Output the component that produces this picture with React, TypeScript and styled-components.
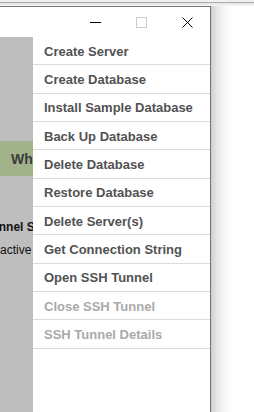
import React from "react";
import styled, { createGlobalStyle } from "styled-components";

const GlobalStyle = createGlobalStyle`
    html, body {
        margin: 0;
        padding: 0;
        background: #ffffff;
        overflow: hidden;
    }
    body {
        font-family: "Liberation Sans", Arial, sans-serif;
    }
`;

const Screen = styled.div`
    width: 254px;
    height: 412px;
    overflow: hidden;
    background: #ffffff;
    display: flex;
    flex-direction: column;
`;

const TopEdge = styled.div`
    height: 6px;
    flex-shrink: 0;
    background: linear-gradient(to bottom, #f0f0f0 0px, #f0f0f0 2px, #a9a9a9 2px, #a9a9a9 3px, #e6e6e6 3px, #f3f3f3 6px);
`;

const Desk = styled.div`
    flex: 1;
    display: flex;
    min-height: 0;
`;

const Window = styled.div`
    width: 211px;
    flex-shrink: 0;
    box-sizing: border-box;
    border-top: 1px solid #7a7a7a;
    border-right: 1px solid #6f6f6f;
    background: #ffffff;
    display: flex;
    flex-direction: column;
`;

const Shadow = styled.div`
    width: 24px;
    background: linear-gradient(to right, #cfcfcf 0px, #e6e6e6 6px, #f7f7f7 14px, #ffffff 22px);
`;

const TitleBar = styled.div`
    height: 30px;
    flex-shrink: 0;
    display: flex;
    justify-content: flex-end;
`;

const CaptionButton = styled.div`
    width: 46px;
    height: 30px;
    display: flex;
    align-items: center;
    justify-content: center;
`;

const Body = styled.div`
    flex: 1;
    display: flex;
    min-height: 0;
`;

const PagePanel = styled.div`
    width: 33px;
    flex-shrink: 0;
    background: #bebebe;
    overflow: hidden;
    display: flex;
    flex-direction: column;
`;

const GreenBar = styled.div`
    margin-top: 104px;
    height: 35px;
    background: #a0b38b;
    display: flex;
    align-items: center;
    padding-left: 11px;
    font-weight: bold;
    font-size: 14px;
    color: #3a3a3a;
    white-space: nowrap;
`;

const PageLine = styled.div<{ $bold?: boolean; $indent: number; $top: number }>`
    margin-top: ${(p) => p.$top}px;
    margin-left: ${(p) => p.$indent}px;
    white-space: nowrap;
    font-size: 12px;
    line-height: 14px;
    font-weight: ${(p) => (p.$bold ? "bold" : "normal")};
    color: #111111;
`;

const Menu = styled.div`
    width: 177px;
    flex-shrink: 0;
    background: #ffffff;
    display: flex;
    flex-direction: column;
`;

const MenuItem = styled.div<{ $disabled?: boolean }>`
    height: 28.33px;
    box-sizing: border-box;
    border-bottom: 1px solid #dcdcdc;
    padding-left: 11px;
    padding-top: 1px;
    display: flex;
    align-items: center;
    font-size: 13px;
    font-weight: bold;
    color: ${(p) => (p.$disabled ? "#a9a9a9" : "#525252")};
    white-space: nowrap;
`;

const items: { label: string; disabled?: boolean }[] = [
    { label: "Create Server" },
    { label: "Create Database" },
    { label: "Install Sample Database" },
    { label: "Back Up Database" },
    { label: "Delete Database" },
    { label: "Restore Database" },
    { label: "Delete Server(s)" },
    { label: "Get Connection String" },
    { label: "Open SSH Tunnel" },
    { label: "Close SSH Tunnel", disabled: true },
    { label: "SSH Tunnel Details", disabled: true },
];

const App: React.FC = () => {
    return (
        <>
            <GlobalStyle />
            <Screen>
                <TopEdge />
                <Desk>
                    <Window>
                        <TitleBar>
                            <CaptionButton>
                                <svg width="11" height="11" viewBox="0 0 11 11">
                                    <line x1="0" y1="5.5" x2="11" y2="5.5" stroke="#000" strokeWidth="1" />
                                </svg>
                            </CaptionButton>
                            <CaptionButton>
                                <svg width="11" height="11" viewBox="0 0 11 11">
                                    <rect x="0.5" y="0.5" width="10" height="10" fill="none" stroke="#cccccc" strokeWidth="1" />
                                </svg>
                            </CaptionButton>
                            <CaptionButton>
                                <svg width="11" height="11" viewBox="0 0 11 11">
                                    <path d="M0.5 0.5 L10.5 10.5 M10.5 0.5 L0.5 10.5" stroke="#000" strokeWidth="1" fill="none" />
                                </svg>
                            </CaptionButton>
                        </TitleBar>
                        <Body>
                            <PagePanel>
                                <GreenBar>What</GreenBar>
                                <PageLine $bold $indent={-15} $top={44}>
                                    Tunnel Status
                                </PageLine>
                                <PageLine $indent={-10} $top={9}>
                                    Inactive
                                </PageLine>
                            </PagePanel>
                            <Menu>
                                {items.map((item) => (
                                    <MenuItem key={item.label} $disabled={item.disabled}>
                                        {item.label}
                                    </MenuItem>
                                ))}
                            </Menu>
                        </Body>
                    </Window>
                    <Shadow />
                </Desk>
            </Screen>
        </>
    );
};

export default App;
